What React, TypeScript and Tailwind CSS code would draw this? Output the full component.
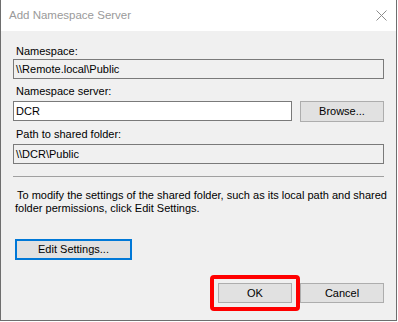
import React from "react";

// read-only / editable text box in the classic WinForms look
function Field({ value, readOnly }: { value: string; readOnly?: boolean }) {
  return (
    <div
      className={`flex h-[20px] items-center border border-[#7a7a7a] pl-[2px] leading-[13px] ${
        readOnly ? "bg-[#f0f0f0]" : "bg-white"
      }`}
    >
      {value}
    </div>
  );
}

function Button({ label, className = "" }: { label: string; className?: string }) {
  return (
    <button
      className={`flex items-center justify-center border border-[#adadad] bg-[#e1e1e1] leading-[13px] text-black ${className}`}
    >
      {label}
    </button>
  );
}

export default function App() {
  return (
    <div className="h-[322px] w-[398px] bg-white font-['Liberation_Sans',Arial,sans-serif] text-[11px] text-black">
      <div className="flex h-[321px] w-[397px] flex-col border-x border-b border-[#6e6e6e]">
        {/* title bar */}
        <div className="flex h-[31px] shrink-0 items-center justify-between bg-white pl-[8px] pr-[8px]">
          <span className="text-[11.5px] text-[#9a9a9a]">Add Namespace Server</span>
          <svg width="11" height="11" viewBox="0 0 11 11" className="mr-[1px]">
            <path d="M0.5 0.5 L10.5 10.5 M10.5 0.5 L0.5 10.5" stroke="#8c8c8c" strokeWidth="1" fill="none" />
          </svg>
        </div>

        {/* body */}
        <div className="flex flex-1 flex-col bg-[#f0f0f0] px-[12px]">
          <div className="mt-[14px] h-[13px] pl-[3px] leading-[13px]">Namespace:</div>
          <div className="mt-[1px]">
            <Field value={"\\\\Remote.local\\Public"} readOnly />
          </div>

          <div className="mt-[6px] h-[13px] pl-[3px] leading-[13px]">Namespace server:</div>
          <div className="mt-[3px] flex gap-[8px]">
            <div className="flex-1">
              <Field value="DCR" />
            </div>
            <Button label="Browse..." className="h-[21px] w-[84px]" />
          </div>

          <div className="mt-[6px] h-[13px] pl-[3px] leading-[13px]">Path to shared folder:</div>
          <div className="mt-[3px]">
            <Field value={"\\\\DCR\\Public"} readOnly />
          </div>

          <div className="mt-[12px] h-px bg-[#a0a0a0]" />

          <div className="mt-[12px] whitespace-nowrap leading-[13px]">
            <div className="pl-[4px]">To modify the settings of the shared folder, such as its local path and shared</div>
            <div className="pl-[2px]">folder permissions, click Edit Settings.</div>
          </div>

          <div className="mt-[24px] pl-[2px]">
            <button className="flex h-[21px] w-[117px] items-center justify-center border-2 border-[#0078d7] bg-[#e1e1e1] leading-[13px] text-black">
              Edit Settings...
            </button>
          </div>

          <div className="mt-[23px] flex justify-end gap-[8px]">
            <div className="relative">
              <Button label="OK" className="h-[20px] w-[74px]" />
              {/* highlight drawn over the OK button */}
              <div className="pointer-events-none absolute -inset-[8px] rounded-[4px] border-4 border-[#ff0000]" />
            </div>
            <Button label="Cancel" className="h-[20px] w-[84px]" />
          </div>
        </div>
      </div>
    </div>
  );
}
